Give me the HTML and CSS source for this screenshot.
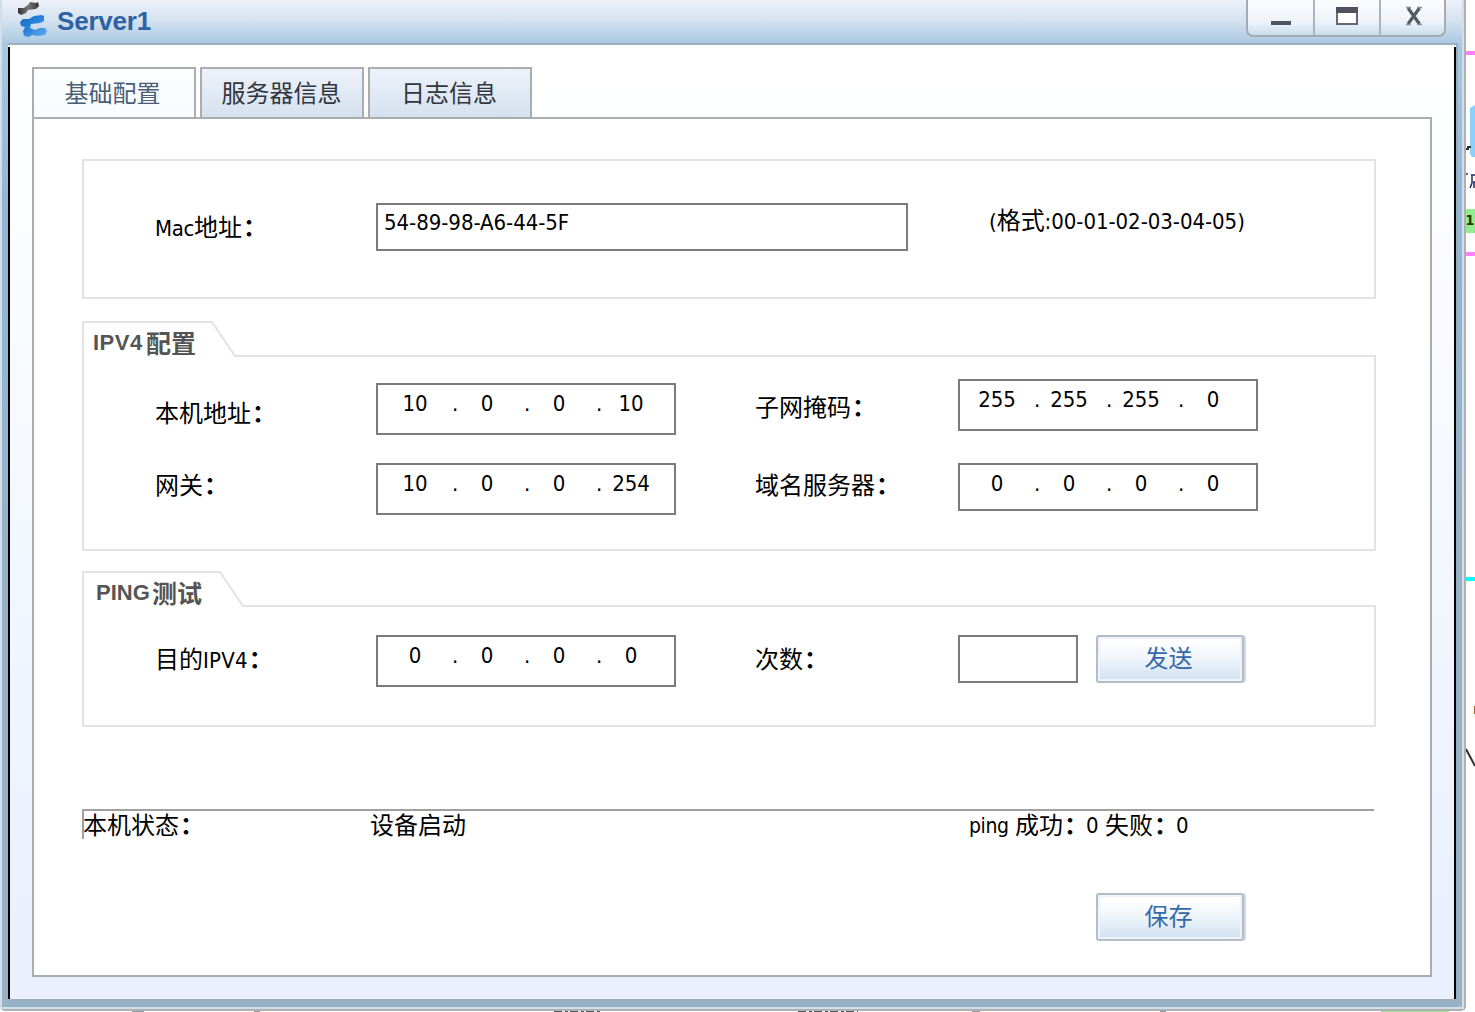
FILE: index.html
```html
<!DOCTYPE html>
<html lang="zh-CN">
<head>
<meta charset="utf-8">
<title>Server1</title>
<link rel="stylesheet" href="styles.css">
</head>
<body>
<div class="screen">
  <main class="window">
    <header class="titlebar">
      <svg class="logo" width="32" height="38" viewBox="0 0 32 38">
        <defs>
          <linearGradient id="dark" x1="0" y1="0" x2="1" y2="0"><stop offset="0" stop-color="#333"/><stop offset=".5" stop-color="#777"/><stop offset="1" stop-color="#333"/></linearGradient>
          <linearGradient id="blue" x1="0" y1="0" x2="1" y2="1"><stop offset="0" stop-color="#1767c4"/><stop offset=".5" stop-color="#2c84dc"/><stop offset="1" stop-color="#65b0f3"/></linearGradient>
        </defs>
        <path d="M0 8l6 0 4-3 2-3 6 1 2-1 1 4-3 3-8 1-2 3-5 2-3-2z" fill="url(#dark)"/>
        <path d="M2 22l3-3 6 0 5-3 8-1 2 1 0 5-4 2-9 1-1 4 5 2 5-2 5 0 2 3-2 4-7 1-6-1-3 2-5-1-1-5 2-4-4-1z" fill="url(#blue)"/>
      </svg>
      <h1 class="title">Server1</h1>
      <div class="controls">
        <span class="control"><svg width="20" height="25"><path d="M0 21h20v4H0z" fill="#50545f"/></svg></span>
        <span class="control"><svg width="22" height="26"><path d="M1 8h20v16H1z" fill="#fff" stroke="#656975" stroke-width="2"/><path d="M0 7h22v6H0z" fill="#50515d"/></svg></span>
        <span class="control close"><svg width="18" height="26"><path d="M3 8L14.500 24M14.500 8L3 24" stroke="#555a63" stroke-width="3.200"/><path d="M1 7.500h5M12 7.500h5M1 24.500h5M12 24.500h5" stroke="#8c9197" stroke-width="1.500"/></svg></span>
      </div>
    </header>
    <div class="frame">
      <div class="client">
        <nav class="tabs">
          <span class="tab active">基础配置</span>
          <span class="tab">服务器信息</span>
          <span class="tab">日志信息</span>
        </nav>
        <section class="panel">
          <div class="group mac">
            <span class="label"><span class="tight">Mac</span>地址<span class="colon">：</span></span>
            <span class="input mac-input">54-89-98-A6-44-5F</span>
            <span class="hint">(<span class="cjk">格式</span>:00-01-02-03-04-05)</span>
          </div>
          <div class="heading">
            <svg width="1294" height="36"><path d="M1 36V1H130L153 35H1294" fill="none" stroke="#e2e2e2" stroke-width="2"/></svg>
            <h2 class="heading-text ipv4"><span>IPV4</span>配置</h2>
          </div>
          <div class="group ipv4-group">
            <span class="label low">本机地址<span class="colon">：</span></span>
            <span class="input ip drop"><b>10</b><i>.</i><b>0</b><i>.</i><b>0</b><i>.</i><b>10</b></span>
            <span class="label">子网掩码<span class="colon">：</span></span>
            <span class="input ip"><b>255</b><i>.</i><b>255</b><i>.</i><b>255</b><i>.</i><b>0</b></span>
            <span class="label second">网关<span class="colon">：</span></span>
            <span class="input ip"><b>10</b><i>.</i><b>0</b><i>.</i><b>0</b><i>.</i><b>254</b></span>
            <span class="label second">域名服务器<span class="colon">：</span></span>
            <span class="input ip short"><b>0</b><i>.</i><b>0</b><i>.</i><b>0</b><i>.</i><b>0</b></span>
          </div>
          <div class="heading ping-heading">
            <svg width="1294" height="36"><path d="M1 36V1H138L161 35H1294" fill="none" stroke="#e2e2e2" stroke-width="2"/></svg>
            <h2 class="heading-text ping"><span>PING</span>测试</h2>
          </div>
          <div class="group ping-group">
            <span class="label">目的<span class="latin">IPV4</span><span class="colon">：</span></span>
            <span class="input ip"><b>0</b><i>.</i><b>0</b><i>.</i><b>0</b><i>.</i><b>0</b></span>
            <span class="label">次数<span class="colon">：</span></span>
            <span class="count-row"><span class="input count"></span><button class="button">发送</button></span>
          </div>
          <div class="status">
            <span class="state-label">本机状态<span class="colon">：</span></span>
            <span class="state">设备启动</span>
            <span class="result"><span class="small">ping</span><span>成功<span class="colon">：</span></span><span class="num">0</span><span>失败<span class="colon">：</span></span><span class="num">0</span></span>
          </div>
          <div class="actions"><button class="button">保存</button></div>
        </section>
      </div>
    </div>
  </main>
  <svg class="backdrop" width="9" height="1012">
    <path d="M0 53h9M0 254h9" stroke="#ff80ff" stroke-width="4"/>
    <path d="M4 108l5-3v52h-3l-2-3z" fill="#8dd0fb"/>
    <path d="M0 149h2v-2h3" stroke="#333" stroke-width="2" fill="none"/>
    <path d="M0 174h2M5 175h4M6 175v8l-2 5M7 182h2M8 182v6" stroke="#222e66" stroke-width="1.500" fill="none"/>
    <path d="M0 209h9v24H0z" fill="#90ee90"/>
    <text x="-.5" y="225" class="port">1</text>
    <path d="M0 579h9" stroke="#0ff" stroke-width="4"/>
    <path d="M8 706h1v8H8z" fill="#b55d25"/>
    <path d="M0 749l9 17" stroke="#333" stroke-width="2"/>
  </svg>
</div>
<svg class="below" width="1475" height="1"><path d="M132 .5h12M254 .5h6M972 .5h8M1160 .5h6" stroke="#8a9aaa"/><path d="M554 .5h48M798 .5h60" stroke="#555" stroke-dasharray="8 3 3 2"/><path d="M1381 .5h68" stroke="#9be59b"/></svg>
</body>
</html>
```

FILE: styles.css
```css
* { box-sizing: border-box; }
body { margin: 0; width: 1475px; height: 1012px; overflow: hidden; background: #fff; color: #000; font: 24px/30px "DejaVu Sans Condensed", "Noto Sans CJK SC", sans-serif; }
.screen { display: flex; height: 1011px; }
.backdrop { display: block; flex: none; }
.below { display: block; }
.port { font: bold 14px "DejaVu Sans Condensed", sans-serif; fill: #342f00; }
.window { width: 1466px; height: 1011px; flex: none; display: flex; flex-direction: column; border: solid #b0b0b0; border-width: 0 2px 2px 0; border-radius: 0 0 5px 5px; background: linear-gradient(90deg, #d3deeb 2px, transparent 2px, transparent 1462px, #d3deeb 1462px), linear-gradient(#edf1fa 0, #d5e2f0 20px, #a9c8e1 44px, #91b6d8 200px, #96b2c8 550px, #96b2c8 100%); }
.titlebar { height: 43px; flex: none; display: flex; align-items: flex-start; padding: 0 18px 0 18px; }
.logo { flex: none; }
.title { margin: 5px 0 0 7px; font: bold 26px/32px "Liberation Sans", sans-serif; letter-spacing: -.2px; color: #2c62a4; }
.controls { margin-left: auto; width: 200px; height: 37px; display: flex; border: 2px solid #a6abb0; border-top: 0; border-radius: 0 0 7px 7px; background: linear-gradient(#fbfcfe, #eef3f9 22px, #c9ddec); }
.control { width: 66px; flex: none; display: flex; justify-content: center; }
.control:first-child { width: 65px; }
.control + .control { border-left: 2px solid #a9b4bf; }
.control svg { display: block; }
.close { padding-left: 2px; }
.frame { flex: 1; padding: 0 6px 6px 8px; border-bottom: 2px solid #d0dfea; display: flex; }
.client { flex: 1; border-top: 2px solid #9eb0bf; border-bottom: 2px solid #a0acb8; border-right: 2px solid #9cadba; background: linear-gradient(#000, #000) 0 2px / 2px 100% no-repeat, linear-gradient(#000, #000) 100% 2px / 2px 100% no-repeat, linear-gradient(#fff, #fdfeff 12%, #eaf0fe 92%); padding: 22px 24px 22px; display: flex; flex-direction: column; }
.tabs { display: flex; gap: 4px; height: 50px; flex: none; }
.tab { width: 164px; height: 50px; border: 2px solid #a9adb0; border-bottom: 0; display: flex; align-items: center; justify-content: center; padding: 2px 1px 0 0; color: #313640; background: linear-gradient(#edf2fa, #d5e1ee); }
.tab.active { color: #495f76; background: linear-gradient(#fbfeff, #fafbff); padding-right: 3px; }
.tab:last-child { padding-right: 2px; }
.panel { flex: 1; border: 2px solid #a9adb0; background: #fff; padding: 40px 54px 0 48px; }
.group { border: 2px solid #e2e2e2; display: grid; grid-template-columns: 221px 379px 203px auto; align-items: start; padding-left: 71px; width: 1294px; }
.mac { height: 140px; grid-template-columns: 221px 613px auto; padding-top: 42px; }
.mac .label { margin-top: 10px; }
.input { border: 2px solid #7b7b7b; background: #fff; height: 52px; font-size: 22px; letter-spacing: -.05px; }
.mac-input { width: 532px; height: 48px; padding: 3px 6px; }
.hint { margin-top: 3px; font-size: 22px; letter-spacing: -.05px; white-space: nowrap; }
.cjk { font-size: 24px; }
.label { white-space: nowrap; }
.tight, .latin { font-size: 22px; letter-spacing: -.4px; }
.latin { letter-spacing: .2px; }
.colon { display: inline-block; width: 20px; font: bold 24px/20px "Noto Sans CJK SC", sans-serif; margin-left: 1px; }
.heading { position: relative; height: 35px; margin-top: 22px; }
.heading svg { display: block; }
.heading-text { position: absolute; left: 11px; top: 6px; margin: 0; font: bold 25px/30px "Noto Sans CJK SC", sans-serif; color: #555; white-space: nowrap; display: flex; }
.heading-text.ping { left: 14px; }
.heading-text span { font: bold 22px/32px "Liberation Sans", sans-serif; width: 53px; letter-spacing: .5px; }
.ping span { width: 56px; letter-spacing: 0; }
.ipv4-group, .ping-group { border-top: 0; }
.ipv4-group { height: 195px; padding-top: 23px; grid-template-rows: 84px auto; }
.ipv4-group .label { margin-top: 14px; }
.ipv4-group .low { margin-top: 20px; }
.ipv4-group .second { margin-top: 8px; }
.ip { width: 300px; display: grid; grid-template-columns: 48px 24px 48px 24px 48px 24px 48px; padding: 4px 0 0 13px; text-align: center; }
.ip b { font-weight: normal; }
.ip i { font-style: normal; padding-left: 8px; }
.drop { margin-top: 4px; }
.short { height: 48px; }
.ping-heading { margin-top: 20px; }
.ping-group { height: 121px; padding-top: 29px; }
.ping-group .label { margin-top: 10px; }
.count-row { display: flex; gap: 18px; }
.count { width: 120px; height: 48px; }
.button { width: 148px; height: 48px; padding: 0 3px 4px 0; border: 2px solid #b3bdca; border-radius: 3px; font: 24px/30px "Noto Sans CJK SC", sans-serif; color: #3669a7; background: linear-gradient(#fff 10%, #f1f6fb 45%, #cfe1f1); box-shadow: inset 0 0 0 2px #edf3f9, 2px 0 0 #d3d9e0; }
.status { margin-top: 82px; width: 1292px; height: 30px; display: grid; grid-template-columns: 286px 599px auto; border-top: 2px solid #a0a0a0; border-left: 2px solid #a0a0a0; white-space: nowrap; }
.state-label { margin-left: -1px; }
.result { display: grid; grid-template-columns: 46px 71px 19px 71px 20px; }
.result .colon { width: 18px; }
.small { font-size: 21px; letter-spacing: -.4px; }
.num { font-size: 22px; }
.actions { margin: 54px 0 0 1014px; }
.actions .button { display: block; }
```
